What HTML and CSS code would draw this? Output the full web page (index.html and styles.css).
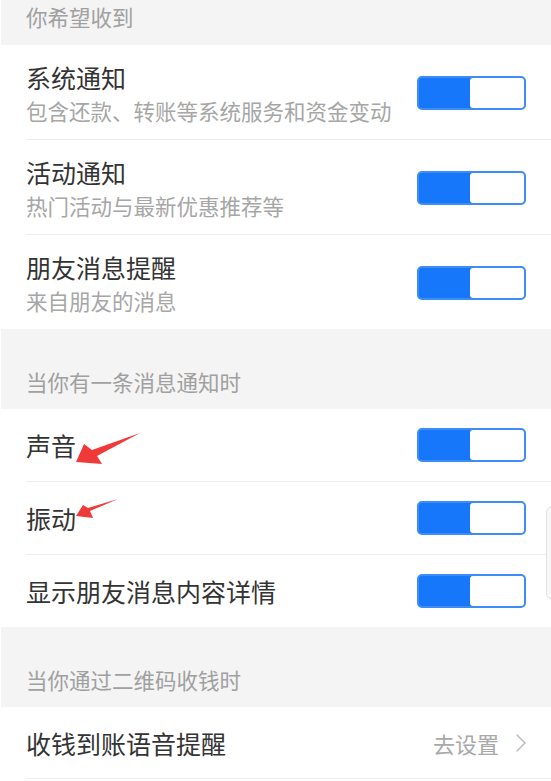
FILE: index.html
```html
<!DOCTYPE html>
<html lang="zh-CN">
<head>
<meta charset="utf-8">
<title>新消息通知</title>
<link rel="stylesheet" href="styles.css">
</head>
<body>
<div class="page">
  <div class="group-head group-head--top">你希望收到</div>
  <div class="list">
    <div class="row row--two">
      <div class="row-text">
        <div class="row-title">系统通知</div>
        <div class="row-sub">包含还款、转账等系统服务和资金变动</div>
      </div>
      <div class="switch"><span class="knob"></span></div>
    </div>
    <div class="row row--two">
      <div class="row-text">
        <div class="row-title">活动通知</div>
        <div class="row-sub">热门活动与最新优惠推荐等</div>
      </div>
      <div class="switch"><span class="knob"></span></div>
    </div>
    <div class="row row--two">
      <div class="row-text">
        <div class="row-title">朋友消息提醒</div>
        <div class="row-sub">来自朋友的消息</div>
      </div>
      <div class="switch"><span class="knob"></span></div>
    </div>
  </div>

  <div class="group-head">当你有一条消息通知时</div>
  <div class="list">
    <div class="row row--one">
      <div class="row-title">声音</div>
      <div class="switch"><span class="knob"></span></div>
    </div>
    <div class="row row--one">
      <div class="row-title">振动</div>
      <div class="switch"><span class="knob"></span></div>
    </div>
    <div class="row row--one">
      <div class="row-title">显示朋友消息内容详情</div>
      <div class="switch"><span class="knob"></span></div>
    </div>
  </div>

  <div class="group-head">当你通过二维码收钱时</div>
  <div class="list">
    <div class="row row--one row--last">
      <div class="row-title">收钱到账语音提醒</div>
      <div class="row-link">
        <span class="row-link-text">去设置</span>
        <svg class="chevron" width="12" height="20" viewBox="0 0 12 20"><path d="M2 2 L10 10 L2 18" fill="none" stroke="#bdbdbd" stroke-width="1.6" stroke-linecap="round" stroke-linejoin="round"/></svg>
      </div>
    </div>
  </div>

  <svg class="arrows" width="551" height="781" viewBox="0 0 551 781">
    <polygon points="76,462 84,444 92,450 140,433 97,456 102,464" fill="#f03a3a"/>
    <polygon points="76,516 83,505 88,508 118,499 90,511 93,518" fill="#f03a3a"/>
  </svg>
  <div class="scroll-hint"></div>
</div>
</body>
</html>
```
FILE: styles.css
```css
* { box-sizing: border-box; }
html, body {
  margin: 0;
  padding: 0;
  background: #ffffff;
}
body {
  font-family: "Noto Sans CJK SC", "Noto Sans", sans-serif;
  color: #333333;
}
.page {
  position: relative;
  width: 551px;
  height: 781px;
  overflow: hidden;
  background: #ffffff;
}
.group-head {
  height: 80px;
  margin-left: 1px;
  background: #f4f4f4;
  color: #a0a0a0;
  font-size: 21.5px;
  line-height: 22px;
  padding: 0 0 16px 25px;
  display: flex;
  align-items: flex-end;
}
.group-head--top {
  height: 45px;
  padding-bottom: 17px;
}
.list {
  background: #ffffff;
}
.row {
  display: flex;
  align-items: center;
  justify-content: space-between;
  margin-left: 26px;
  padding-right: 25px;
  border-bottom: 1px solid #ededed;
}
.row:last-child { border-bottom: none; }
.row--last { border-bottom: 1px solid #ededed !important; }
.row--two {
  padding-top: 16px;
  padding-bottom: 14px;
}
.row--one {
  height: 73px;
}
.row--one:last-child { height: 72px; }
.row-text {
  display: flex;
  flex-direction: column;
}
.row-title {
  font-size: 25px;
  line-height: 32px;
  color: #333333;
}
.row-sub {
  margin-top: 4px;
  font-size: 21.5px;
  line-height: 28px;
  color: #a6a6a6;
}
.switch {
  position: relative;
  width: 109px;
  height: 34px;
  border-radius: 5px;
  background: #1677fb;
  border: 2px solid #3e8cf6;
  flex: none;
}
.knob {
  position: absolute;
  right: 0;
  top: 0;
  width: 54px;
  height: 30px;
  background: #ffffff;
  border-radius: 3px;
}
.row-link {
  display: flex;
  align-items: center;
  gap: 16px;
}
.row-link-text {
  font-size: 22px;
  line-height: 30px;
  color: #a8a8a8;
}
.chevron { display: block; margin-right: -1px; }
.arrows {
  position: absolute;
  left: 0;
  top: 0;
  pointer-events: none;
}
.scroll-hint {
  position: absolute;
  left: 546px;
  top: 507px;
  width: 14px;
  height: 92px;
  border-radius: 5px;
  border: 1px solid #e2e2e2;
  background: #f8f8f8;
}
```
